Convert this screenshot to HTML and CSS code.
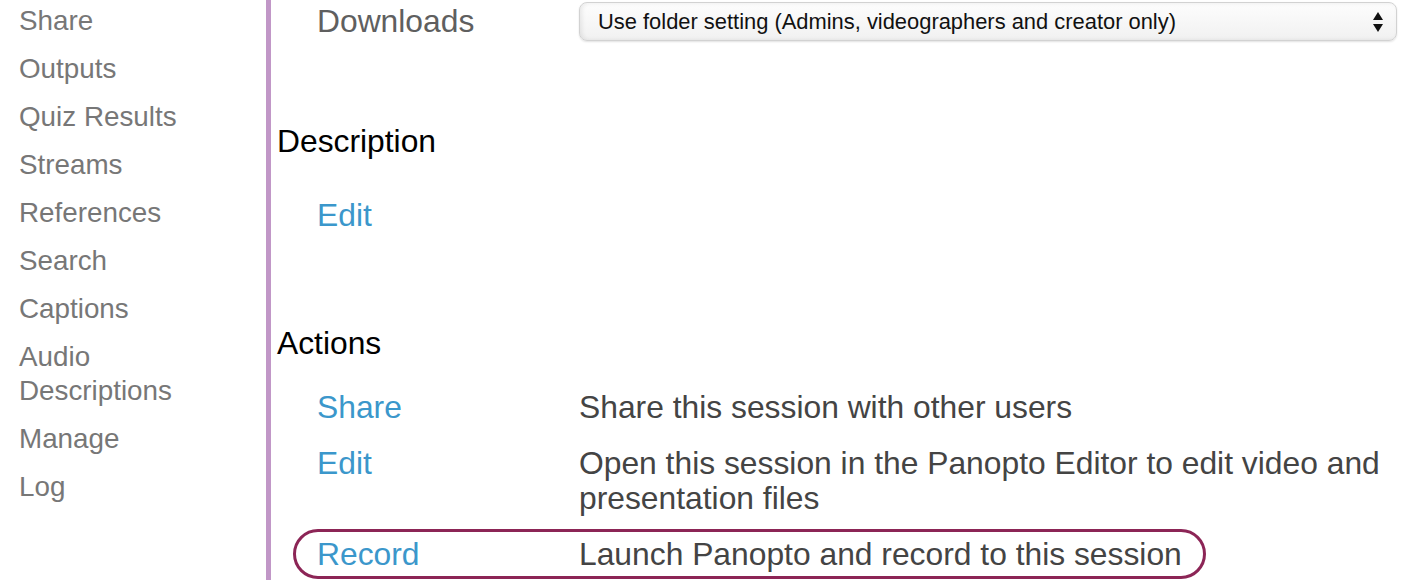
FILE: index.html
```html
<!DOCTYPE html>
<html lang="en">
<head>
    <meta charset="UTF-8">
    <meta name="viewport" content="width=device-width, initial-scale=1.0">
    <title>Session Settings - Panopto</title>
    <link rel="stylesheet" href="styles.css">
</head>
<body>
    <div class="page">
        <ul class="side-nav">
            <li>Share</li>
            <li>Outputs</li>
            <li>Quiz Results</li>
            <li>Streams</li>
            <li>References</li>
            <li>Search</li>
            <li>Captions</li>
            <li>Audio<br>Descriptions</li>
            <li>Manage</li>
            <li>Log</li>
        </ul>

        <div class="content">
            <div class="field-row">
                <span class="field-label">Downloads</span>
                <div class="fake-select">
                    <span>Use folder setting (Admins, videographers and creator only)</span>
                    <svg class="select-arrows" width="10" height="20" viewBox="0 0 10 20">
                        <path d="M5 0 L10 8 L0 8 Z" fill="#111"/>
                        <path d="M0 12 L10 12 L5 20 Z" fill="#111"/>
                    </svg>
                </div>
            </div>

            <h2 class="section-title first">Description</h2>
            <div class="action-list desc-list">
                <div class="action-row">
                    <a class="action-link" href="#">Edit</a>
                    <span class="action-desc"></span>
                </div>
            </div>

            <h2 class="section-title">Actions</h2>
            <div class="action-list">
                <div class="action-row">
                    <a class="action-link" href="#">Share</a>
                    <span class="action-desc">Share this session with other users</span>
                </div>
                <div class="action-row">
                    <a class="action-link" href="#">Edit</a>
                    <span class="action-desc">Open this session in the Panopto Editor to edit video and presentation files</span>
                </div>
                <div class="action-row highlighted">
                    <a class="action-link" href="#">Record</a>
                    <span class="action-desc">Launch Panopto and record to this session</span>
                </div>
            </div>
        </div>
    </div>
</body>
</html>
```

FILE: styles.css
```css
body {
    font-family: "Liberation Sans", Arial, Helvetica, sans-serif;
    background-color: #fff;
    margin: 0;
    overflow: hidden;
}
.page {
    display: flex;
    height: 580px;
}
.side-nav {
    list-style: none;
    margin: -3px 0 0 0;
    padding: 0 0 0 19px;
    width: 247px;
    font-size: 27.8px;
    line-height: 34px;
    color: #777;
}
.side-nav li {
    padding: 7px 0;
}
.content {
    flex: 1;
    border-left: 5px solid #c197c7;
    padding-left: 6px;
    padding-right: 5px;
    font-size: 31.8px;
    line-height: 35px;
}
.field-row {
    display: flex;
    align-items: center;
    height: 42px;
}
.field-label {
    width: 262px;
    margin-left: 40px;
    color: #5f5f5f;
}
.fake-select {
    flex: 1;
    height: 39px;
    margin-top: 1px;
    display: flex;
    align-items: center;
    justify-content: space-between;
    padding: 0 13px 0 18px;
    box-sizing: border-box;
    border: 1px solid #d2d2d2;
    border-radius: 8px;
    background: linear-gradient(#fdfdfd, #f1f1f1);
    box-shadow: inset 2px 0 4px rgba(0, 0, 0, 0.08), 0 1px 2px rgba(0, 0, 0, 0.12);
    font-size: 21.9px;
    color: #111;
}
.section-title {
    font-size: 31.8px;
    font-weight: normal;
    line-height: 36px;
    color: #000;
    margin: 85px 0 0 0;
}
.section-title.first {
    margin-top: 81px;
}
.action-list {
    display: flex;
    flex-direction: column;
    gap: 6px;
    margin-top: 21px;
}
.action-list.desc-list {
    margin-top: 31px;
}
.action-row {
    display: grid;
    grid-template-columns: 262px 1fr;
    margin-left: 16px;
    padding: 4.5px 0 4.5px 21px;
    border: 3px solid transparent;
    border-radius: 26px;
}
.action-row.highlighted {
    border-color: #8c2556;
    align-self: flex-start;
    padding-right: 21px;
    grid-template-columns: 262px auto;
}
.action-link {
    color: #3b97cb;
    text-decoration: none;
}
.action-desc {
    color: #444;
}
```
